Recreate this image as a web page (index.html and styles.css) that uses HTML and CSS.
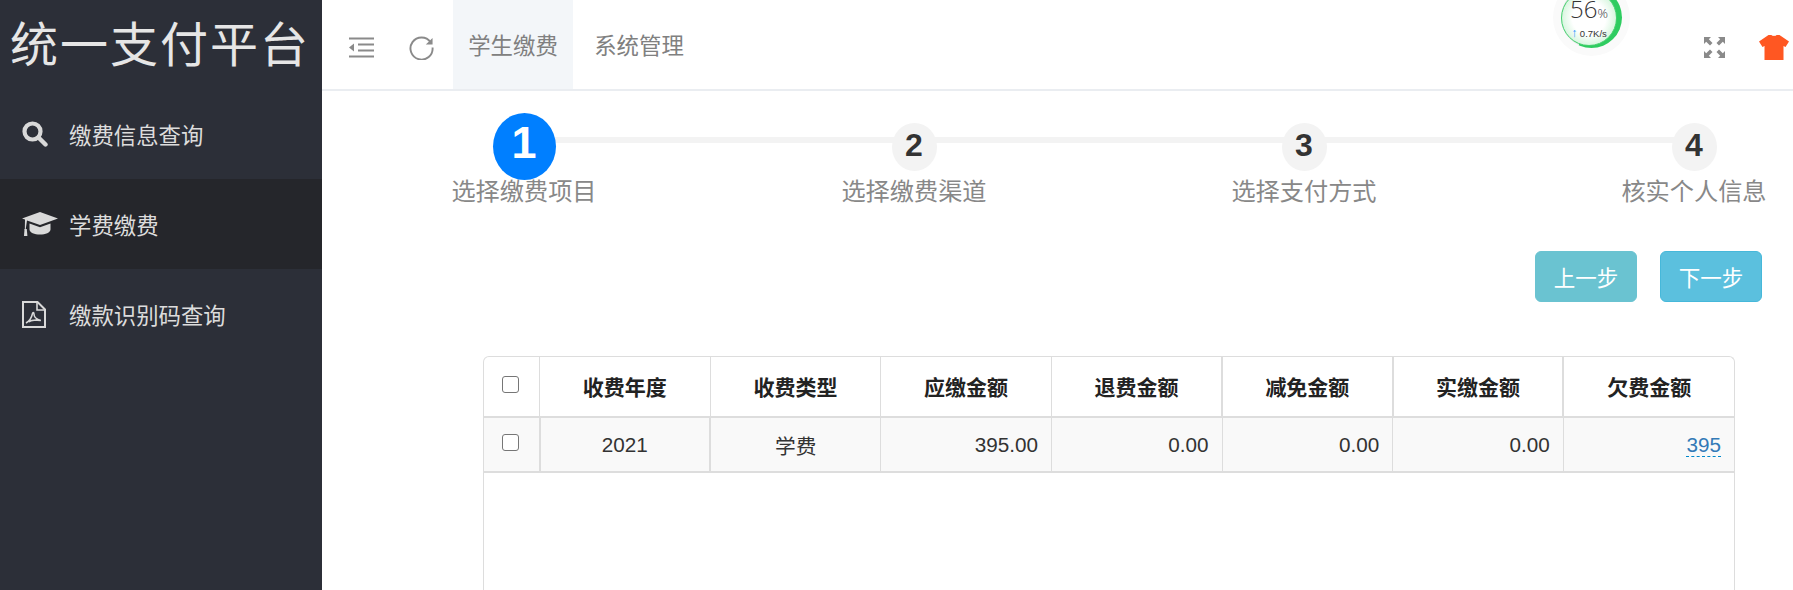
FILE: index.html
```html
<!DOCTYPE html>
<html lang="zh-CN">
<head>
    <meta charset="UTF-8">
    <title>统一支付平台</title>
    <link rel="stylesheet" href="styles.css">
</head>
<body>
<div class="app">
    <aside class="sidebar">
        <div class="logo">统一支付平台</div>
        <a class="menu-item">
            <svg class="menu-icon" viewBox="0 0 26 26"><circle cx="10.5" cy="10.5" r="8" fill="none" stroke="#d9d9d9" stroke-width="4.2"/><path d="M16.5 16.5l7 7" stroke="#d9d9d9" stroke-width="4.4" stroke-linecap="round"/></svg>
            <span>缴费信息查询</span>
        </a>
        <a class="menu-item active">
            <svg class="menu-icon cap" viewBox="0 0 36 25"><path d="M18 0L36 6.5 18 13 5 8.5 3.6 18h-.8L3 7.4 0 6.500z" fill="#d9d9d9"/><path d="M7.500 11.500L18 15.200l10.500-3.700v6c0 3-5 5-10.500 5s-10.500-2-10.500-5z" fill="#d9d9d9"/><path d="M2.500 17h2.300l.6 7H2z" fill="#d9d9d9"/></svg>
            <span>学费缴费</span>
        </a>
        <a class="menu-item">
            <svg class="menu-icon pdf" viewBox="0 0 24 27"><path d="M1 1h14.500L23 8.500V26H1z" fill="none" stroke="#d9d9d9" stroke-width="2"/><path d="M15 1v8h8" fill="none" stroke="#d9d9d9" stroke-width="1.600"/><path d="M4 22c3-1.500 5.500-5 6.500-9.500.3-1.500 1.400-1.500 1.400 0 0 3 2.500 6 7 7-4-.6-10-.2-12 1.400" fill="none" stroke="#d9d9d9" stroke-width="1.500"/></svg>
            <span>缴款识别码查询</span>
        </a>
    </aside>

    <main class="main">
        <header class="topbar">
            <div class="tool first">
                <svg class="tool-icon" viewBox="0 0 25 21"><path d="M0 .5h25v2H0zM9 6.500h16v2H9zM9 12.500h16v2H9zM0 18.500h25v2H0z" fill="#8a8a8a"/><path d="M5 6.500v8L0 10.500z" fill="#8a8a8a"/></svg>
            </div>
            <div class="tool">
                <svg class="tool-icon" viewBox="0 0 26 26"><path d="M22.500 7.500A11.500 11.500 0 1 0 24.500 13" fill="none" stroke="#8a8a8a" stroke-width="2"/><path d="M24.500 3v7h-7z" fill="#8a8a8a"/></svg>
            </div>
            <a class="tab current">学生缴费</a>
            <a class="tab">系统管理</a>
            <div class="topbar-right">
                <svg class="full-icon" viewBox="0 0 21 21"><path d="M0 0h7L4.800 2.200 8.500 6 6 8.500 2.200 4.800 0 7zM21 0v7l-2.200-2.200L15 8.500 12.500 6l3.700-3.800L14 0zM0 21v-7l2.200 2.200L6 12.500 8.500 15l-3.700 3.800L7 21zM21 21h-7l2.200-2.200L12.500 15l2.500-2.500 3.800 3.700L21 14z" fill="#8a8a8a"/></svg>
                <svg class="shirt-icon" viewBox="0 0 30 25"><path d="M9.500 0h3c.7 1.200 4.300 1.200 5 0h3L30 6.500 26.500 12 24.500 11v14H5.500V11l-2 1L0 6.500z" fill="#ff5722"/></svg>
            </div>
            <div class="speed-ball">
                <div class="speed-ring">
                    <div class="speed-num">56<small>%</small></div>
                    <div class="speed-net"><b>↑</b> 0.7K/s</div>
                </div>
            </div>
        </header>

        <section class="steps">
            <div class="step active">
                <div class="step-head"><span class="step-num">1</span></div>
                <div class="step-label">选择缴费项目</div>
            </div>
            <div class="step">
                <div class="step-head"><span class="step-num">2</span></div>
                <div class="step-label">选择缴费渠道</div>
            </div>
            <div class="step">
                <div class="step-head"><span class="step-num">3</span></div>
                <div class="step-label">选择支付方式</div>
            </div>
            <div class="step last">
                <div class="step-head"><span class="step-num">4</span></div>
                <div class="step-label">核实个人信息</div>
            </div>
        </section>

        <div class="actions">
            <button class="btn prev">上一步</button>
            <button class="btn next">下一步</button>
        </div>

        <div class="table-box">
            <table class="fee-table">
                <thead>
                    <tr>
                        <th class="check"><span class="checkbox"></span></th>
                        <th>收费年度</th>
                        <th>收费类型</th>
                        <th>应缴金额</th>
                        <th>退费金额</th>
                        <th>减免金额</th>
                        <th>实缴金额</th>
                        <th>欠费金额</th>
                    </tr>
                </thead>
                <tbody>
                    <tr>
                        <td class="check"><span class="checkbox"></span></td>
                        <td class="center">2021</td>
                        <td class="center">学费</td>
                        <td>395.00</td>
                        <td>0.00</td>
                        <td>0.00</td>
                        <td>0.00</td>
                        <td><a class="editable">395</a></td>
                    </tr>
                </tbody>
            </table>
        </div>
    </main>
</div>
</body>
</html>
```

FILE: styles.css
```css
html, body {
    height: 100%;
}
body {
    margin: 0;
    overflow: hidden;
    font-family: "Liberation Sans", "Noto Sans CJK SC", sans-serif;
    color: #333;
    background: #fff;
}
.app {
    display: flex;
    height: 590px;
}

/* sidebar */
.sidebar {
    width: 322px;
    flex: none;
    background: #2c2f38;
}
.logo {
    height: 89px;
    line-height: 92px;
    padding-left: 10px;
    font-size: 48px;
    letter-spacing: 2px;
    color: #e6e6e6;
    white-space: nowrap;
}
.menu-item {
    display: flex;
    align-items: center;
    height: 90px;
    padding-left: 22px;
    font-size: 22.400px;
    color: #dcdcdc;
}
.menu-item.active {
    background: #25262b;
}
.menu-icon {
    width: 26px;
    height: 26px;
    margin-right: 21px;
    flex: none;
}
.menu-icon.cap {
    width: 36px;
    height: 25px;
    margin-right: 11px;
}
.menu-icon.pdf {
    width: 24px;
    height: 27px;
    margin-right: 23px;
}

/* top bar */
.main {
    flex: 1;
    min-width: 0;
    display: flex;
    flex-direction: column;
}
.topbar {
    position: relative;
    display: flex;
    align-items: stretch;
    height: 89px;
    flex: none;
    border-bottom: 2px solid #eaedf1;
}
.tool {
    display: flex;
    align-items: center;
    justify-content: center;
    width: 60px;
    padding-top: 6px;
}
.tool.first {
    margin-left: 9px;
}
.tool-icon {
    width: 25px;
    height: 25px;
}
.tab {
    display: flex;
    align-items: center;
    justify-content: center;
    width: 120px;
    padding-bottom: 2px;
    font-size: 22.400px;
    color: #808080;
}
.tab.current {
    margin-left: 2px;
    background: #f3f6f9;
}
.tab + .tab {
    margin-left: 6px;
}
.topbar-right {
    display: flex;
    align-items: center;
    gap: 34px;
    margin-left: auto;
    padding: 6px 4px 0 0;
}
.full-icon {
    width: 21px;
    height: 21px;
}
.shirt-icon {
    width: 30px;
    height: 25px;
}
.speed-ball {
    position: absolute;
    left: 1239px;
    top: -13px;
    width: 61px;
    height: 61px;
    border-radius: 50%;
    box-shadow: 0 0 0 8px #fafafa;
    background: conic-gradient(#2ecc60 0 205deg, #e6e6e6 205deg 360deg);
}
.speed-ring {
    position: absolute;
    left: 0;
    top: 2.500px;
    width: 54px;
    height: 54px;
    border: 1px solid #45d16f;
    border-radius: 50%;
    background: radial-gradient(closest-side, #fff 62%, #d9f6e0 100%);
    text-align: center;
}
.speed-num {
    margin-top: 6px;
    font-family: "Open Sans", sans-serif;
    font-size: 24px;
    font-weight: 300;
    line-height: 24px;
    color: #333;
}
.speed-num small {
    font-size: 13px;
}
.speed-net {
    margin-top: 3px;
    font-size: 9.500px;
    line-height: 11px;
    color: #333;
}
.speed-net b {
    font-size: 12px;
    color: #1e90ff;
}

/* steps */
.steps {
    display: flex;
    flex: none;
    padding: 22px 0 0 7px;
}
.step {
    position: relative;
    flex: none;
    width: 390px;
    text-align: center;
}
.step::after {
    content: "";
    position: absolute;
    left: 50%;
    top: 24px;
    width: 390px;
    height: 6px;
    background: #f3f3f3;
}
.step.last::after {
    display: none;
}
.step-head {
    position: relative;
    z-index: 1;
    display: flex;
    align-items: center;
    justify-content: center;
    height: 67px;
}
.step-num {
    display: block;
    width: 45px;
    height: 48px;
    line-height: 45px;
    border-radius: 50%;
    background: #f3f3f3;
    font-size: 32px;
    font-weight: bold;
    color: #333;
}
.step.active .step-num {
    width: 63px;
    height: 67px;
    line-height: 60px;
    background: #007fff;
    font-size: 45px;
    color: #fff;
}
.step-label {
    margin-top: -2px;
    line-height: 28px;
    font-size: 24.200px;
    color: #888;
    white-space: nowrap;
}

/* buttons */
.actions {
    display: flex;
    justify-content: flex-end;
    gap: 23px;
    flex: none;
    margin-top: 45px;
    padding-right: 31px;
}
.btn {
    width: 102px;
    height: 51px;
    padding: 0;
    border: 1px solid #46b8da;
    border-radius: 6px;
    font-family: inherit;
    font-size: 21.500px;
    color: #fff;
    background: #5bc0de;
}
.btn.prev {
    border-color: #6ac3d1;
    background: #6ac3d1;
}

/* table */
.table-box {
    flex: 1;
    width: 1250px;
    margin: 54px 0 0 161px;
    border: 1px solid #ddd;
    border-bottom: none;
    border-radius: 6px 6px 0 0;
}
.fee-table {
    width: 100%;
    table-layout: fixed;
    border-collapse: collapse;
    font-size: 20.700px;
    color: #333;
}
.fee-table th {
    height: 57px;
    padding: 0 0 2px;
    border-left: 1px solid #ddd;
    border-bottom: 2px solid #ddd;
    font-size: 21px;
    color: #222;
    text-align: center;
}
.fee-table td {
    height: 53px;
    padding: 0 13px 0 0;
    border-left: 1px solid #ddd;
    border-bottom: 2px solid #ddd;
    background: #f9f9f9;
    text-align: right;
}
.fee-table th:nth-child(n+6),
.fee-table td:nth-child(2),
.fee-table td:nth-child(3) {
    border-left-width: 2px;
}
.fee-table th:first-child,
.fee-table td:first-child {
    border-left: none;
}
.fee-table .check {
    width: 55px;
    padding: 0;
    text-align: center;
}
.fee-table .center {
    padding: 0;
    text-align: center;
}
.checkbox {
    display: block;
    width: 15px;
    height: 15px;
    margin: -5px auto 0 18px;
    border: 1px solid #767676;
    border-radius: 3px;
    background: #fff;
}
.editable {
    color: #337ab7;
    border-bottom: 1px dashed #08c;
}
```
